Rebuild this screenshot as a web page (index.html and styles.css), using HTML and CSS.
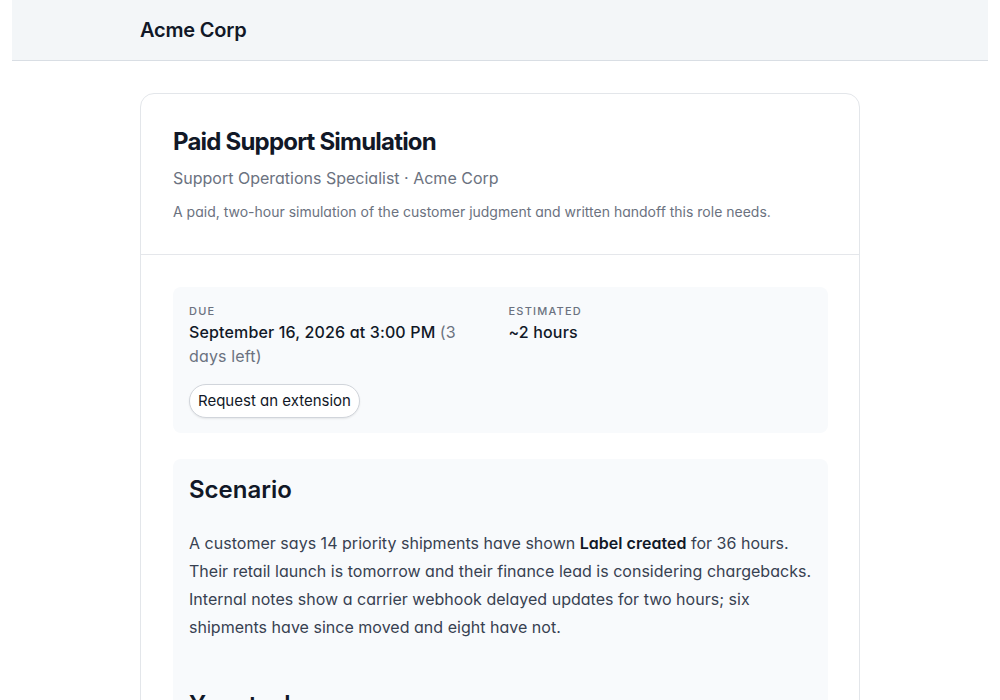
FILE: index.html
```html
<!DOCTYPE html>
<html lang="en">
<head>
<meta charset="utf-8">
<title>Paid Support Simulation</title>
<link rel="stylesheet" href="styles.css">
</head>
<body>
<div class="page">
  <header class="topbar">
    <div class="topbar-inner">Acme Corp</div>
  </header>
  <main class="container">
    <section class="card">
      <div class="card-head">
        <h1 class="title">Paid Support Simulation</h1>
        <p class="subtitle">Support Operations Specialist · Acme Corp</p>
        <p class="desc">A paid, two-hour simulation of the customer judgment and written handoff this role needs.</p>
      </div>
      <div class="card-body">
        <div class="meta">
          <div class="meta-col">
            <div class="meta-label">Due</div>
            <div class="meta-value">September 16, 2026 at 3:00 PM <span class="muted">(3 days left)</span></div>
            <button class="pill">Request an extension</button>
          </div>
          <div class="meta-col">
            <div class="meta-label">Estimated</div>
            <div class="meta-value">~2 hours</div>
          </div>
        </div>
        <div class="brief">
          <h2 class="brief-h">Scenario</h2>
          <p class="brief-p">A customer says 14 priority shipments have shown <strong>Label created</strong> for 36 hours. Their retail launch is tomorrow and their finance lead is considering chargebacks. Internal notes show a carrier webhook delayed updates for two hours; six shipments have since moved and eight have not.</p>
          <h2 class="brief-h brief-h2">Your task</h2>
          <p class="brief-p">Write the customer reply and the internal handoff.</p>
        </div>
      </div>
    </section>
  </main>
</div>
</body>
</html>
```

FILE: styles.css
```css
* { box-sizing: border-box; }
html, body { margin: 0; padding: 0; background: #ffffff; }
body {
  font-family: "Inter", "Noto Sans", "Liberation Sans", sans-serif;
  font-feature-settings: "cv11";
  color: #1f2937;
}
.page { padding: 0 12px; }
.topbar {
  background: #f3f6f8;
  border-bottom: 1px solid #d9dee4;
  height: 61px;
}
.topbar-inner {
  width: 720px;
  margin: 0 auto;
  height: 60px;
  display: flex;
  align-items: center;
  font-size: 20px;
  font-weight: 600;
  letter-spacing: -0.2px;
  color: #111827;
  font-feature-settings: normal;
}
.container {
  width: 720px;
  margin: 32px auto 0;
}
.card {
  border: 1px solid #e3e6ea;
  border-radius: 14px;
  background: #fff;
}
.card-head {
  padding: 32px 32px 32px;
  border-bottom: 1px solid #e5e7eb;
}
.title {
  margin: 0;
  font-size: 24px;
  line-height: 32px;
  font-weight: 700;
  letter-spacing: -0.8px;
  color: #111827;
  font-feature-settings: normal;
}
.subtitle {
  margin: 8px 0 0;
  font-size: 16px;
  line-height: 24px;
  color: #6b7280;
}
.desc {
  margin: 12px 0 0;
  font-size: 14px;
  line-height: 20px;
  color: #6b7280;
}
.card-body { padding: 32px 31px 0 32px; }
.meta {
  background: #f8fafc;
  border-radius: 8px;
  padding: 17px 16px 15px;
  display: grid;
  grid-template-columns: 1fr 1fr;
  column-gap: 16px;
}
.meta-label {
  font-size: 11px;
  line-height: 14px;
  letter-spacing: 1.2px;
  text-transform: uppercase;
  color: #6b7280;
  font-weight: 500;
}
.meta-value {
  margin-top: 2px;
  font-size: 16px;
  line-height: 24px;
  font-weight: 500;
  letter-spacing: 0.15px;
  color: #111827;
}
.muted { color: #6b7280; font-weight: 400; }
.pill {
  margin-top: 16px;
  font-family: inherit;
  font-feature-settings: "cv11";
  font-size: 15px;
  line-height: 20px;
  padding: 6px 8px;
  background: #fff;
  color: #111827;
  border: 1px solid #d1d5db;
  border-radius: 999px;
  box-shadow: 0 1px 2px rgba(0,0,0,0.08);
  cursor: pointer;
}
.brief {
  margin-top: 26px;
  background: #f8fafc;
  border-radius: 8px;
  padding: 15px 8px 24px 16px;
}
.brief-h {
  margin: 0;
  font-size: 24px;
  line-height: 32px;
  font-weight: 600;
  color: #111827;
  font-feature-settings: normal;
}
.brief-h2 { margin-top: 48px; }
.brief-p {
  margin: 23px 0 0;
  font-size: 16px;
  line-height: 28px;
  letter-spacing: 0.02px;
  color: #374151;
}
.brief-p strong { color: #111827; font-weight: 600; }
```
